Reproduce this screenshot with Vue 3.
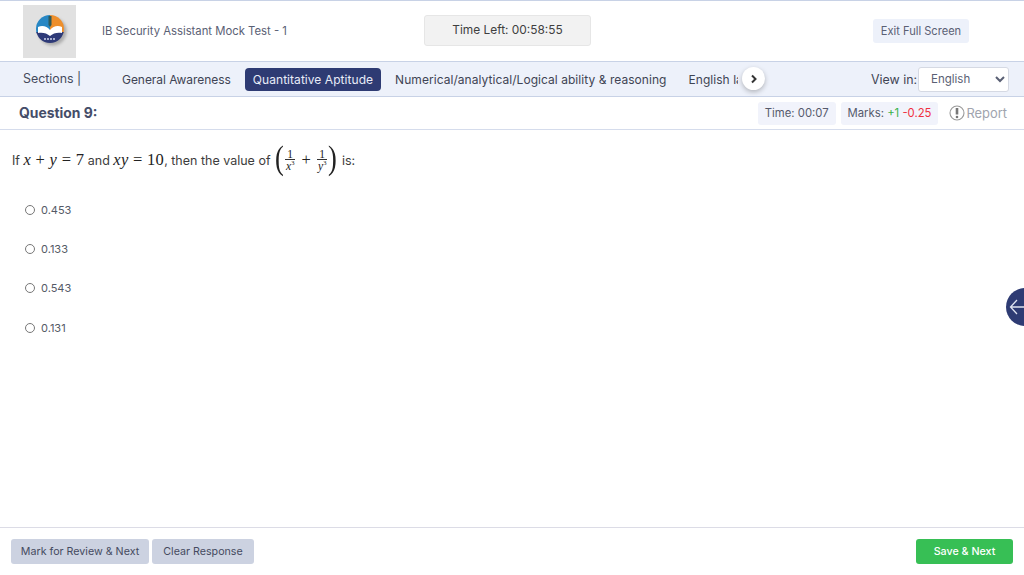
<script setup>
const options = ['0.453', '0.133', '0.543', '0.131']
</script>

<template>
  <div class="page">
    <header class="top">
      <div class="logo-box">
        <svg class="logo" viewBox="0 0 36 36" width="36" height="36">
          <defs>
            <clipPath id="c"><circle cx="15" cy="15" r="14" /></clipPath>
            <filter id="s" x="-30%" y="-30%" width="160%" height="160%"><feGaussianBlur stdDeviation="1.500" /></filter>
          </defs>
          <circle cx="17.500" cy="17.500" r="14" fill="#8f8f8f" opacity=".65" filter="url(#s)" />
          <g clip-path="url(#c)">
            <rect width="15" height="19" fill="#2787c4" />
            <rect x="15" width="15" height="19" fill="#ee8f2c" />
            <rect y="18" width="30" height="13" fill="#2e3a78" />
            <path d="M3 13c4-2 9-1 12 3 3-4 8-5 12-3v6c-4-1-9 0-12 3-3-3-8-4-12-3z" fill="#fff" />
            <path d="M13.500 2h3v9l-1.500 2-1.500-2z" fill="#2f5a5a" />
            <path d="M9 25h12" stroke="#cfd5ea" stroke-width="1.300" stroke-dasharray="2 1" />
          </g>
        </svg>
      </div>
      <div class="title">IB Security Assistant Mock Test - 1</div>
      <div class="timer">Time Left: 00:58:55</div>
      <button class="exit">Exit Full Screen</button>
    </header>

    <nav class="sections">
      <div class="sec-label">Sections |</div>
      <div class="tabs">
        <span class="tab">General Awareness</span>
        <span class="tab active">Quantitative Aptitude</span>
        <span class="tab">Numerical/analytical/Logical ability &amp; reasoning</span>
        <span class="tab">English language</span>
      </div>
      <span class="next">
        <svg viewBox="0 0 10 10" width="10" height="10"><path d="M3 1.500 6.500 5 3 8.500" fill="none" stroke="#333" stroke-width="2" /></svg>
      </span>
      <label class="view">View in:</label>
      <select class="lang"><option>English</option></select>
    </nav>

    <section class="qbar">
      <div class="qno">Question 9:</div>
      <div class="chip">Time: 00:07</div>
      <div class="chip">Marks: <i class="plus">+1</i> <i class="minus">-0.25</i></div>
      <div class="report">
        <svg viewBox="0 0 16 16" width="16" height="16"><circle cx="8" cy="8" r="7" fill="none" stroke="#999" stroke-width="1.100" /><path d="M8 3v6.500" stroke="#777" stroke-width="2.600" /><circle cx="8" cy="12" r="1.300" fill="#777" /></svg>
        Report
      </div>
    </section>

    <main class="body">
      <div class="question">
        <span>If </span>
        <span class="m"><em>x</em> + <em>y</em> = 7</span>
        <span> and </span>
        <span class="m"><em>xy</em> = 10</span>
        <span>, then the value of </span>
        <span class="paren">(</span>
        <span class="frac"><b>1</b><b class="den"><em>x</em><sup>3</sup></b></span>
        <span class="m plusm">+</span>
        <span class="frac"><b>1</b><b class="den"><em>y</em><sup>3</sup></b></span>
        <span class="paren">)</span>
        <span> is:</span>
      </div>
      <ul class="options">
        <li v-for="o in options" :key="o"><span class="radio"></span>{{ o }}</li>
      </ul>
    </main>

    <footer class="foot">
      <button class="grey">Mark for Review &amp; Next</button>
      <button class="grey">Clear Response</button>
      <button class="save">Save &amp; Next</button>
    </footer>

    <div class="side">
      <svg viewBox="0 0 22 16" width="22" height="16"><path d="M8 1 1.500 8 8 15M2 8h20" fill="none" stroke="#dfe3f0" stroke-width="1.300" /></svg>
    </div>
  </div>
</template>

<style>
html, body { margin: 0; background: #fff; }
</style>

<style scoped>
* { box-sizing: border-box; }
.page {
  position: relative;
  width: 1024px;
  height: 575px;
  overflow: hidden;
  display: flex;
  flex-direction: column;
  font-family: Inter, "Open Sans", sans-serif;
  color: #454a5c;
  font-size: 12px;
  background: #fff;
}
.top {
  height: 62px;
  flex: none;
  display: flex;
  align-items: center;
  border-top: 1px solid #c8d2e6;
  border-bottom: 1px solid #c8d2e6;
  padding-left: 23px;
}
.logo-box {
  width: 53px;
  height: 53px;
  background: #e1e1e1;
  display: flex;
  align-items: center;
  justify-content: center;
}
.logo { display: block; margin: 1px 0 0 7px; }
.title {
  margin-left: 26px;
  width: 322px;
  font-size: 11.300px;
  color: #5a6074;
}
.timer {
  width: 167px;
  height: 31px;
  margin-top: -1px;
  background: #f2f2f2;
  border: 1px solid #e6e6e6;
  border-radius: 3px;
  text-align: center;
  line-height: 27px;
  font-size: 11.900px;
  color: #3f3f3f;
}
.exit {
  margin-left: 282px;
  width: 96px;
  height: 24px;
  padding: 0;
  border: 0;
  border-radius: 3px;
  background: #edf1fa;
  font: inherit;
  font-size: 11.100px;
  color: #5a6074;
}
.sections {
  position: relative;
  height: 35px;
  flex: none;
  display: flex;
  align-items: center;
  background: #edf1fa;
  border-bottom: 1px solid #c8d2e6;
  padding-left: 23px;
}
.sec-label {
  width: 91px;
  font-size: 12.400px;
  color: #454a5c;
  margin-top: -2px;
}
.tabs {
  width: 624px;
  overflow: hidden;
  white-space: nowrap;
  display: flex;
  align-items: center;
  flex: none;
}
.tab {
  flex: none;
  font-size: 12px;
  letter-spacing: .05px;
  height: 23px;
  line-height: 23px;
  padding: 0 8px;
  margin-right: 6px;
  border-radius: 4px;
  color: #3f4454;
}
.tab:first-child { letter-spacing: -.05px; }
.tab.active {
  background: #2e3b73;
  color: #e8ecf8;
}
.next {
  position: absolute;
  left: 742px;
  top: 5px;
  width: 23px;
  height: 23px;
  border-radius: 50%;
  background: #fff;
  box-shadow: 0 2px 5px rgba(0, 0, 0, .25);
  display: flex;
  align-items: center;
  justify-content: center;
}
.view {
  margin-left: 133px;
  width: 47px;
  font-size: 12.400px;
  color: #3f4454;
  white-space: nowrap;
}
.lang {
  width: 91px;
  height: 25px;
  border: 1px solid #d5d9e3;
  border-radius: 3px;
  background: #fff;
  padding-left: 8px;
  font: inherit;
  font-size: 11.500px;
  color: #5a6074;
}
.qbar {
  height: 33px;
  flex: none;
  display: flex;
  align-items: center;
  border-bottom: 1px solid #d5dcec;
  padding: 0 17px 0 19px;
}
.qno {
  font-weight: 700;
  font-size: 13.900px;
  color: #454d68;
  margin-right: auto;
}
.chip {
  height: 23px;
  line-height: 23px;
  padding: 0 7px;
  border-radius: 3px;
  background: #f1f3fb;
  font-size: 11.300px;
  color: #555a6c;
  margin-right: 5px;
}
.chip i { font-style: normal; }
.plus { color: #38b24a; }
.minus { color: #f0303f; }
.report {
  display: flex;
  align-items: center;
  gap: 1px;
  margin-left: 6px;
  font-size: 12.900px;
  color: #a0a4ae;
}
.body {
  flex: 1;
  min-height: 0;
}
.question {
  display: flex;
  align-items: center;
  height: 34px;
  margin: 13px 0 0 12px;
  font-size: 12.500px;
  color: #3d3d3d;
  white-space: pre;
}
.m {
  font-family: "Liberation Serif", serif;
  font-size: 16.500px;
  letter-spacing: .3px;
  color: #222;
}
.m em { font-style: italic; }
.plusm { margin: 0 6px; }
.paren {
  font-family: "Liberation Serif", serif;
  font-size: 33px;
  line-height: 30px;
  transform: scaleX(.8);
  margin-top: -5px;
  color: #222;
}
.frac {
  display: inline-flex;
  flex-direction: column;
  align-items: center;
  font-family: "Liberation Serif", serif;
  font-size: 11.500px;
  line-height: 10.500px;
  color: #222;
}
.frac b { font-weight: 400; padding: 0 1px; }
.frac .den {
  border-top: 1px solid #333;
  padding-top: 1px;
}
.frac sup {
  font-size: 6.500px;
  line-height: 0;
}
.options {
  list-style: none;
  margin: 13px 0 0;
  padding: 0 0 0 25px;
}
.options li {
  height: 39.400px;
  display: flex;
  align-items: center;
  font-size: 11px;
  color: #555a66;
}
.radio {
  width: 10px;
  height: 10px;
  border: 1px solid #777;
  border-radius: 50%;
  margin-right: 6px;
}
.foot {
  height: 48px;
  flex: none;
  display: flex;
  align-items: center;
  gap: 3px;
  border-top: 1px solid #dcdce6;
  padding: 0 11px 0 11px;
}
.foot button {
  height: 25px;
  padding: 0;
  border: 0;
  border-radius: 3px;
  font: inherit;
  font-size: 10.700px;
}
.grey {
  background: #ccd2e1;
  color: #454a60;
}
.grey:nth-child(1) { width: 138px; }
.grey:nth-child(2) { width: 102px; }
.foot .save {
  width: 97px;
  margin-left: auto;
  background: #37bf55;
  color: #fff;
  font-weight: 500;
}
.side {
  position: absolute;
  left: 1006px;
  top: 288px;
  width: 38px;
  height: 38px;
  border-radius: 50%;
  background: #2e3b73;
  display: flex;
  align-items: center;
  padding-left: 3px;
}
</style>
